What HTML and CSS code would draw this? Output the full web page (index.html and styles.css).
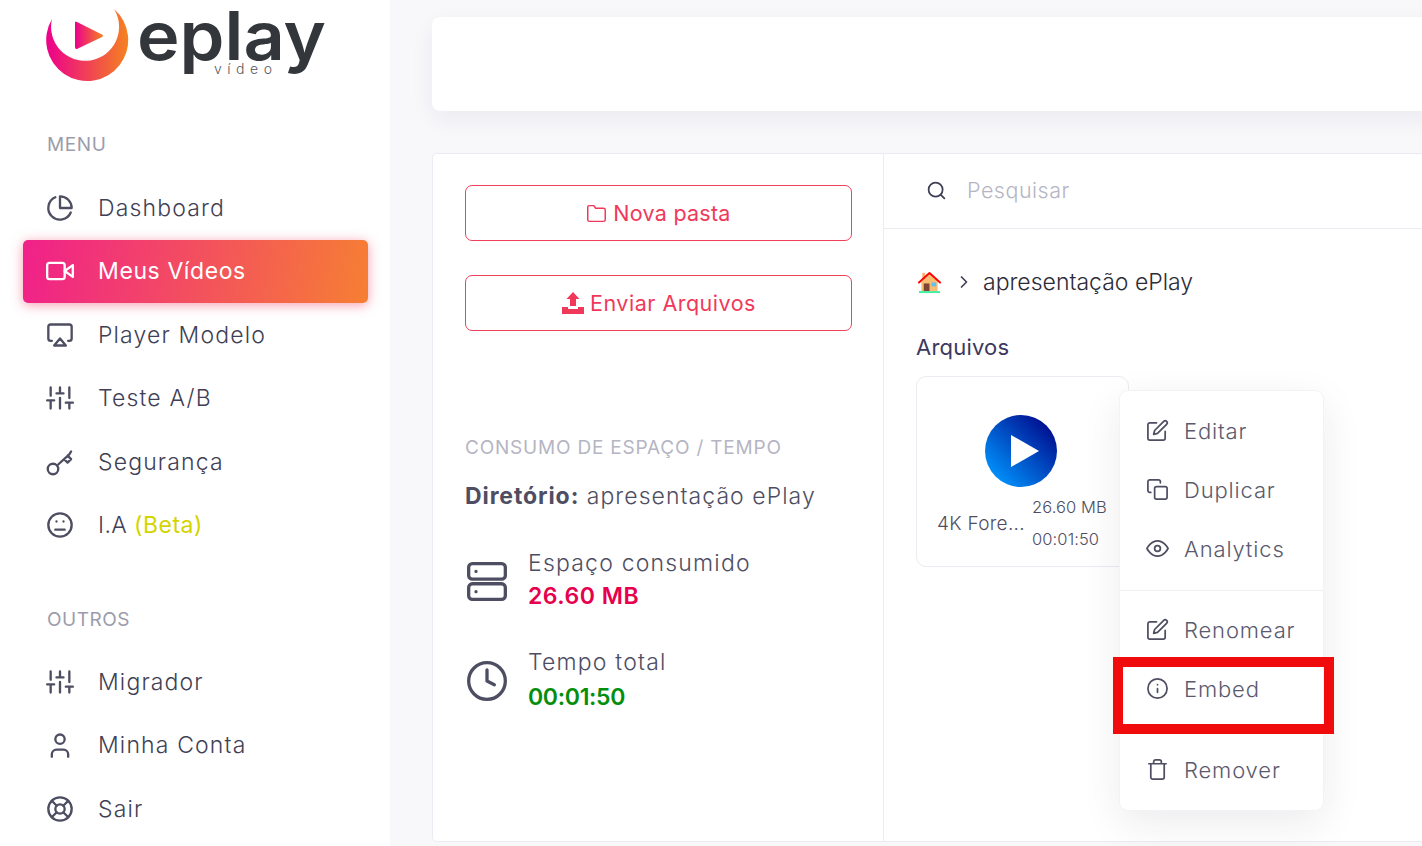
FILE: index.html
```html
<!DOCTYPE html>
<html lang="pt-BR">
<head>
<meta charset="utf-8">
<title>ePlay Vídeo</title>
<link rel="stylesheet" href="styles.css">
</head>
<body>
<svg class="sprite" width="0" height="0" aria-hidden="true">
  <defs>
    <linearGradient id="brand" x1="0" x2="1" y1="0" y2="0"><stop offset="0" stop-color="#ec008c"/><stop offset="1" stop-color="#f58220"/></linearGradient>
    <linearGradient id="blue" x1="0.1" x2="0.9" y1="0.9" y2="0.1"><stop offset="0" stop-color="#0096ff"/><stop offset="1" stop-color="#000a8c"/></linearGradient>
    <symbol id="i-sliders" viewBox="0 0 24 24"><path d="M4 21v-7M4 10V3M12 21v-9M12 8V3M20 21v-5M20 12V3M1 14h6M9 8h6M17 16h6"/></symbol>
    <symbol id="i-edit" viewBox="0 0 24 24"><path d="M11 4H4a2 2 0 0 0-2 2v14a2 2 0 0 0 2 2h14a2 2 0 0 0 2-2v-7"/><path d="M18.500 2.500a2.120 2.120 0 0 1 3 3L12 15l-4 1 1-4z"/></symbol>
  </defs>
</svg>
<div class="app">
  <aside class="sidebar">
    <div class="logo">
      <svg class="logo-art" width="290" height="84" viewBox="0 0 290 84">
        <path d="M6 19A41 41 0 1 0 68 9A34 34 0 1 1 6 19Z" fill="url(#brand)"/>
        <path d="M31 22Q29 20.500 29 23V47Q29 50 32 48.500L56 37Q58 35.500 56 34.500Z" fill="url(#brand)"/>
        <text x="91" y="60" class="logo-word" textLength="189" lengthAdjust="spacingAndGlyphs">eplay</text>
        <text x="168" y="74" class="logo-sub" textLength="58">vídeo</text>
      </svg>
    </div>
    <div class="nav-label">MENU</div>
    <nav class="nav">
      <a class="nav-item"><svg class="icon" viewBox="0 0 24 24"><path d="M21.210 15.890A10 10 0 1 1 8 2.830"/><path d="M22 12A10 10 0 0 0 12 2v10z"/></svg><span>Dashboard</span></a>
      <a class="nav-item active"><svg class="icon" viewBox="0 0 24 24"><rect x="1" y="5" width="15" height="14" rx="2"/><path d="M23 7l-7 5 7 5z"/></svg><span>Meus Vídeos</span></a>
      <a class="nav-item"><svg class="icon" viewBox="0 0 24 24"><path d="M5 17H4a2 2 0 0 1-2-2V5a2 2 0 0 1 2-2h16a2 2 0 0 1 2 2v10a2 2 0 0 1-2 2h-1"/><path d="M12 15l5 6H7z"/></svg><span>Player Modelo</span></a>
      <a class="nav-item"><svg class="icon"><use href="#i-sliders"/></svg><span>Teste A/B</span></a>
      <a class="nav-item"><svg class="icon" viewBox="0 0 24 24"><circle cx="6" cy="18" r="4.500"/><path d="M9.500 15L20 5.500M15.500 9.500l3 3 3-3-3-3M20 5.500L21.500 3"/></svg><span>Segurança</span></a>
      <a class="nav-item"><svg class="icon" viewBox="0 0 24 24"><circle cx="12" cy="12" r="10"/><path d="M8 16h8M9 9h.01M15 9h.01"/></svg><span class="ia">I.A <em class="beta">(Beta)</em></span></a>
    </nav>
    <div class="nav-label outros">OUTROS</div>
    <nav class="nav">
      <a class="nav-item"><svg class="icon"><use href="#i-sliders"/></svg><span>Migrador</span></a>
      <a class="nav-item"><svg class="icon" viewBox="0 0 24 24"><path d="M19 22v-2a4 4 0 0 0-4-4H9a4 4 0 0 0-4 4v2"/><circle cx="12" cy="7" r="4"/></svg><span>Minha Conta</span></a>
      <a class="nav-item"><svg class="icon" viewBox="0 0 24 24"><circle cx="12" cy="12" r="10"/><circle cx="12" cy="12" r="4"/><path d="M4.900 4.900l4.300 4.300M14.800 14.800l4.300 4.300M14.800 9.200l4.300-4.300M4.900 19.100l4.300-4.300"/></svg><span>Sair</span></a>
    </nav>
  </aside>

  <main class="content">
    <div class="topbar"></div>
    <section class="panel">
      <div class="panel-left">
        <button class="btn"><svg class="btn-icon" viewBox="0 0 24 24"><path d="M22 19a2 2 0 0 1-2 2H4a2 2 0 0 1-2-2V5a2 2 0 0 1 2-2h5l2 3h9a2 2 0 0 1 2 2z"/></svg>Nova pasta</button>
        <button class="btn btn-second"><svg class="btn-icon solid" viewBox="0 0 24 24"><path d="M12 1l6.500 7H15v7H9V8H5.500zM1 16h6v2h10v-2h6v7H1z"/></svg>Enviar Arquivos</button>
        <h3 class="usage-title">CONSUMO DE ESPAÇO / TEMPO</h3>
        <p class="directory"><strong>Diretório:</strong> apresentação ePlay</p>
        <div class="stat">
          <svg class="stat-icon" viewBox="0 0 24 24"><rect x="2" y="2.500" width="20" height="8.500" rx="2"/><rect x="2" y="13.500" width="20" height="8.500" rx="2"/><path d="M6 6.800h.01M6 17.800h.01"/></svg>
          <div><div class="stat-name">Espaço consumido</div><div class="stat-value red">26.60 MB</div></div>
        </div>
        <div class="stat stat-time">
          <svg class="stat-icon" viewBox="0 0 24 24"><circle cx="12" cy="12" r="10"/><path d="M12 6v6l4 2"/></svg>
          <div><div class="stat-name">Tempo total</div><div class="stat-value green">00:01:50</div></div>
        </div>
      </div>
      <div class="panel-right">
        <div class="search">
          <svg class="search-icon" viewBox="0 0 24 24"><circle cx="11" cy="11" r="8"/><path d="M21 21l-4.300-4.300"/></svg>
          <span class="search-text">Pesquisar</span>
        </div>
        <div class="browser">
          <div class="crumbs">
            <svg class="home" viewBox="0 0 24 24"><rect x="4.500" y="2" width="3" height="6" fill="#f4b36b"/><path d="M3.500 11L12 3l8.500 8v10h-17z" fill="#f6bd73"/><path d="M1 12L12 2l11 10" fill="none" stroke="#f00" stroke-width="2"/><rect x="6" y="13" width="6" height="8" fill="#7d4533"/><rect x="14" y="12" width="5" height="4" fill="#5cc4f5"/><rect x="1" y="21" width="22" height="2" fill="#3cf0a0"/></svg>
            <svg class="chev" viewBox="0 0 24 24"><path d="M9 18l6-6-6-6"/></svg>
            <span class="crumb-text">apresentação ePlay</span>
          </div>
          <h4 class="files-title">Arquivos</h4>
          <article class="file-card">
            <svg class="play" viewBox="0 0 72 72"><circle cx="36" cy="36" r="36" fill="url(#blue)"/><path d="M26 20l28 16-28 16z" fill="#fff"/></svg>
            <div class="file-meta">
              <span class="file-name">4K Fore...</span>
              <div class="file-nums"><span>26.60 MB</span><span>00:01:50</span></div>
            </div>
          </article>
        </div>
      </div>
    </section>
  </main>
</div>

<div class="menu">
  <a class="menu-item"><svg class="menu-icon"><use href="#i-edit"/></svg>Editar</a>
  <a class="menu-item"><svg class="menu-icon" viewBox="0 0 24 24"><rect x="9" y="9" width="13" height="13" rx="2"/><path d="M5 15H4a2 2 0 0 1-2-2V4a2 2 0 0 1 2-2h9a2 2 0 0 1 2 2v1"/></svg>Duplicar</a>
  <a class="menu-item"><svg class="menu-icon" viewBox="0 0 24 24"><path d="M1 12s4-8 11-8 11 8 11 8-4 8-11 8-11-8-11-8z"/><circle cx="12" cy="12" r="3"/></svg>Analytics</a>
  <div class="menu-divider"></div>
  <a class="menu-item"><svg class="menu-icon"><use href="#i-edit"/></svg>Renomear</a>
  <a class="menu-item"><svg class="menu-icon" viewBox="0 0 24 24"><circle cx="12" cy="12" r="10"/><path d="M12 16v-4M12 8h.01"/></svg>Embed</a>
  <a class="menu-item menu-last"><svg class="menu-icon" viewBox="0 0 24 24"><path d="M3 6h18M19 6v14a2 2 0 0 1-2 2H7a2 2 0 0 1-2-2V6M8 6V4a2 2 0 0 1 2-2h4a2 2 0 0 1 2 2v2"/></svg>Remover</a>
</div>
<div class="highlight"></div>
</body>
</html>
```
FILE: styles.css
```css
* { box-sizing: border-box; }
html, body { margin: 0; height: 100%; overflow: hidden; }
body { background: #f8f8fb; font-family: Inter, "Liberation Sans", sans-serif; color: #4e4e62; font-weight: 300; }
.sprite { position: absolute; }
svg { fill: none; stroke: currentColor; stroke-width: 2; stroke-linecap: round; stroke-linejoin: round; flex: none; }
.app { display: flex; height: 846px; }

.sidebar { width: 390px; flex: none; background: #fff; padding: 0 22px 0 23px; }
.logo { height: 82px; padding-left: 23px; }
.logo-art { display: block; stroke: none; }
.logo-word { font-family: Inter, sans-serif; font-size: 67px; font-weight: 600; fill: #33373b; }
.logo-sub { font-family: Inter, sans-serif; font-size: 14px; font-weight: 300; fill: #55595d; }
.nav-label { margin: 52px 0 0 24px; height: 22px; line-height: 22px; font-size: 19px; font-weight: 400; color: #9c9cac; letter-spacing: .6px; }
.outros { margin-top: 52px; letter-spacing: .5px; }
.nav { margin-top: 20px; }
.outros + .nav { margin-top: 19px; }
.nav-item { display: flex; align-items: center; height: 63.500px; padding-left: 23px; font-size: 23px; letter-spacing: 1.150px; color: #3f3f55; white-space: nowrap; }
.nav-item .icon { width: 28px; height: 28px; margin-right: 24px; color: #4e4e62; }
.nav-item.active { color: #fff; font-weight: 400; letter-spacing: .6px; background: linear-gradient(100deg, #f0208a, #f67f33); border-radius: 5px; box-shadow: 0 2px 12px rgba(240, 60, 100, .5); }
.nav-item.active .icon { color: #fff; }
.ia { letter-spacing: .4px; }
.beta { font-style: normal; color: #d4d400; font-weight: 400; letter-spacing: .5px; }

.content { flex: 1; min-width: 0; padding: 17px 0 0 42px; }
.topbar { height: 94px; margin-right: -20px; background: #fff; border-radius: 8px; box-shadow: 0 8px 24px rgba(30, 30, 60, .06); }
.panel { display: flex; height: 689px; margin: 42px -20px 0 0; background: #fff; border: 1px solid #ebebf2; border-radius: 5px; }
.panel-left { width: 451px; flex: none; padding: 31px 31px 0 32px; border-right: 1px solid #ebebf2; }
.btn { display: flex; align-items: center; justify-content: center; width: 100%; height: 56px; padding: 0; background: #fff; border: 1px solid #f0405c; border-radius: 7px; color: #f0395a; font: 400 21.500px Inter, sans-serif; letter-spacing: .25px; }
.btn-second { margin-top: 34px; letter-spacing: .5px; }
.btn-icon { width: 21px; height: 21px; margin-right: 6px; stroke-width: 1.700; }
.btn-icon.solid { width: 24px; height: 24px; margin-right: 5px; fill: currentColor; stroke: none; }
.usage-title { margin: 106px 0 0; font-size: 19px; line-height: 22px; font-weight: 400; color: #b5b5c3; letter-spacing: .8px; white-space: nowrap; }
.directory { margin: 23px 0 0; font-size: 23px; line-height: 28px; letter-spacing: 1.050px; white-space: nowrap; }
.directory strong { font-weight: 700; letter-spacing: .9px; }
.stat { display: flex; align-items: center; margin-top: 38px; }
.stat-time { margin-top: 33px; }
.stat-icon { width: 44px; height: 44px; margin-right: 19px; stroke-width: 1.800; }
.stat-name { font-size: 23px; line-height: 30px; letter-spacing: 1.200px; white-space: nowrap; }
.stat-value { font-size: 23px; line-height: 36px; font-weight: 600; letter-spacing: .5px; }
.stat-value.green { margin-top: 2px; letter-spacing: -.3px; }
.red { color: #e6004d; }
.green { color: #058e0c; }

.panel-right { flex: 1; min-width: 0; }
.search { display: flex; align-items: center; height: 75px; padding: 0 0 2px 42px; border-bottom: 1px solid #ebebf2; }
.search-icon { width: 21px; height: 21px; margin-right: 20px; color: #3f3f55; }
.search-text { font-size: 21.500px; color: #b5b5c3; letter-spacing: .5px; }
.browser { padding: 0 0 0 32px; }
.crumbs { display: flex; align-items: center; margin-top: 37px; height: 32px; font-size: 23px; color: #2c2c38; }
.home { width: 23px; height: 23px; stroke: none; margin-left: 2px; }
.chev { width: 20px; height: 20px; margin: 0 9px 0 13px; color: #3f3f55; }
.crumb-text { letter-spacing: 0; }
.files-title { margin: 33px 0 0; font-size: 22px; line-height: 32px; font-weight: 400; color: #3c3860; letter-spacing: .2px; }
.file-card { width: 213px; height: 191px; margin-top: 13px; padding: 38px 0 0 20px; background: #fff; border: 1px solid #ebebf2; border-radius: 10px; }
.play { display: block; width: 72px; height: 72px; margin-left: 48px; stroke: none; }
.file-meta { display: flex; align-items: center; margin-top: 10px; color: #4e4e62; white-space: nowrap; }
.file-name { width: 95px; font-size: 19px; letter-spacing: .3px; }
.file-nums { display: flex; flex-direction: column; gap: 11px; font-size: 16.500px; line-height: 21px; letter-spacing: .1px; }

.menu { position: absolute; left: 1120px; top: 391px; width: 203px; height: 419px; padding: 10px 0 0 26px; background: #fff; border-radius: 8px; box-shadow: 0 0 0 1px #f3f3f6, 0 12px 40px rgba(30, 30, 60, .09); }
.menu-item { display: flex; align-items: center; height: 59px; font-size: 22px; letter-spacing: .85px; color: #5a5a6e; }
.menu-icon { width: 23px; height: 23px; margin-right: 15px; color: #4e4e62; stroke-width: 1.800; }
.menu-divider { height: 1px; margin: 12px 0 9px -26px; background: #f0f0f3; }
.menu-last { margin-top: 22px; }
.highlight { position: absolute; left: 1113px; top: 657px; width: 221px; height: 77px; border: 10px solid #f00c0c; }
```
